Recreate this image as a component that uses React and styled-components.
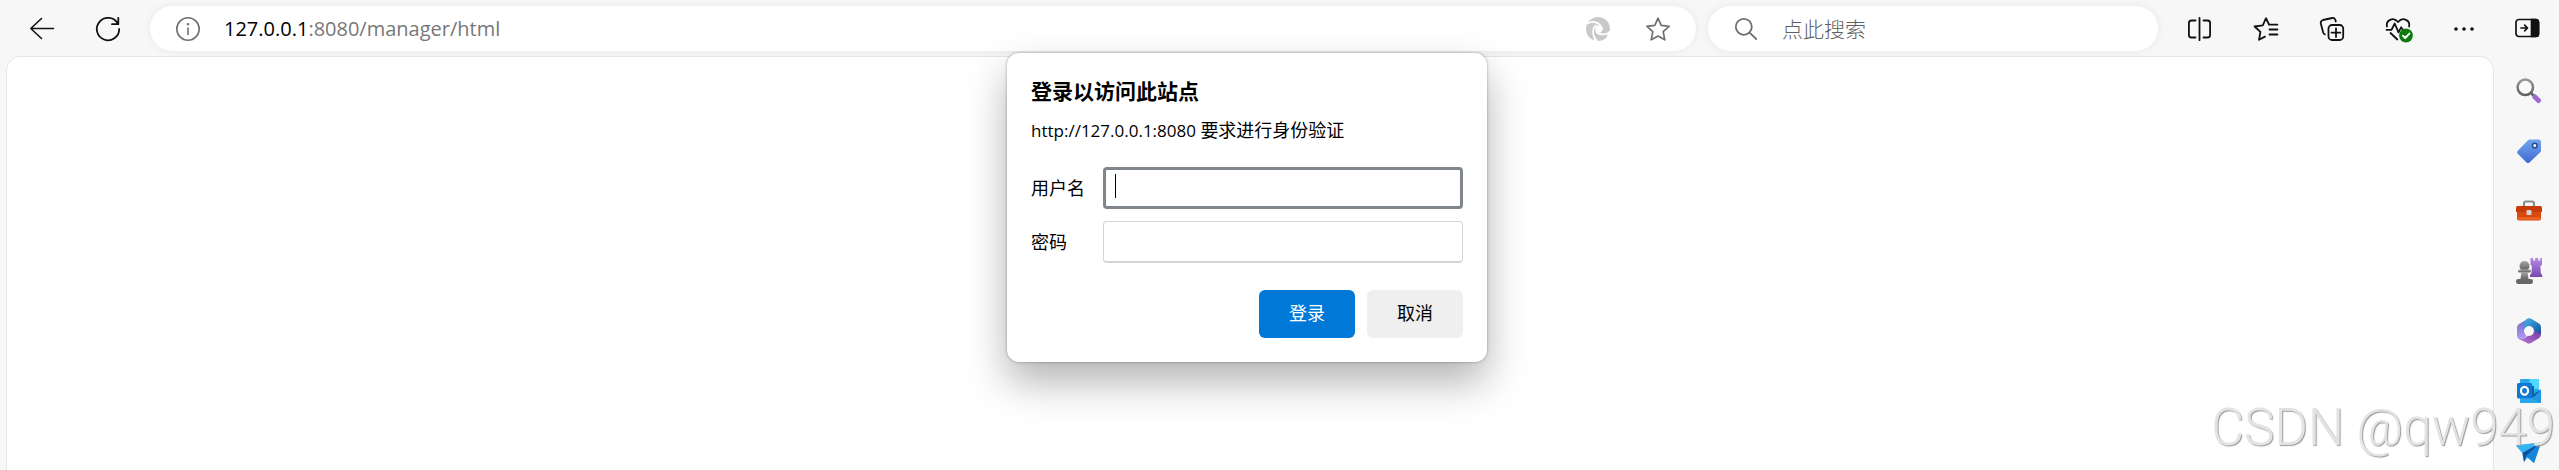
import React from "react";
import styled, { createGlobalStyle } from "styled-components";

const GlobalStyle = createGlobalStyle`
  *, *::before, *::after { box-sizing: border-box; }
  body {
    margin: 0;
    background: #f7f7f7;
    color: #000;
    font-family: "Open Sans", "Noto Sans CJK SC", sans-serif;
    overflow: hidden;
  }
  button, input { font-family: inherit; }
`;

const Browser = styled.div`
  display: flex;
  flex-direction: column;
  height: 100vh;
`;

const Toolbar = styled.header`
  display: flex;
  height: 56px;
  flex: none;
`;

const ToolbarMain = styled.div`
  flex: 1;
  min-width: 0;
  display: flex;
  align-items: center;
  gap: 18px;
  padding: 6px 6px 5px 18px;
`;

const SideSlot = styled.div`
  width: 65px;
  flex: none;
  display: flex;
  align-items: center;
  justify-content: center;
`;

const IconButton = styled.button`
  width: ${(p) => (p.$small ? "24px" : "48px")};
  height: ${(p) => (p.$small ? "24px" : "44px")};
  flex: none;
  display: flex;
  align-items: center;
  justify-content: center;
  padding: 0;
  border: 0;
  background: transparent;
  color: ${(p) => p.$color || "#111"};
`;

const Svg = styled.svg`
  width: ${(p) => p.$size || 24}px;
  height: ${(p) => p.$size || 24}px;
  display: block;
  flex: none;
  overflow: visible;
`;

const Fields = styled.div`
  flex: 1;
  min-width: 0;
  display: flex;
  gap: 12px;
`;

const Field = styled.div`
  flex: ${(p) => (p.$search ? "0 1 450px" : "1 1 0")};
  min-width: 0;
  height: 45px;
  display: flex;
  align-items: center;
  gap: 24px;
  padding: 0 26px;
  border-radius: 24px;
  background: #fff;
  color: #707070;
  box-shadow: 0 0 8px rgba(0, 0, 0, 0.07);
`;

const Url = styled.div`
  flex: 1;
  min-width: 0;
  font-size: 20px;
  line-height: 28px;
  white-space: nowrap;
  overflow: hidden;
  color: #777;
`;

const Host = styled.span`
  color: #000;
`;

const FieldActions = styled.div`
  display: flex;
  gap: 36px;
`;

const SearchInput = styled.input`
  flex: 1;
  min-width: 0;
  padding: 0;
  border: 0;
  outline: 0;
  background: transparent;
  font-size: 21px;
  line-height: 28px;
  font-weight: 300;
  &::placeholder { color: #606060; opacity: 1; }
`;

const Actions = styled.nav`
  display: flex;
  gap: 18px;
`;

const Body = styled.div`
  flex: 1;
  min-height: 0;
  display: flex;
`;

const Stage = styled.main`
  position: relative;
  flex: 1;
  min-width: 0;
  display: flex;
  padding-left: 6px;
`;

const PageSurface = styled.div`
  flex: 1;
  border: 1px solid #e6e6e6;
  border-bottom: 0;
  border-radius: 15px 15px 0 0;
  background: #fff;
`;

const Dialog = styled.form`
  position: absolute;
  top: -3px;
  left: 50%;
  width: 480px;
  margin-left: -240px;
  padding: 24px;
  border-radius: 12px;
  background: #fff;
  box-shadow: 0 0 3px rgba(0, 0, 0, 0.35), 0 20px 40px rgba(0, 0, 0, 0.3);
`;

const Title = styled.h1`
  margin: 0 0 14px;
  font-size: 21px;
  line-height: 28px;
  font-weight: 700;
`;

const Message = styled.p`
  margin: 0 0 24px;
  font-size: 17px;
  line-height: 24px;
`;

const Han = styled.span`
  font-size: 18px;
  line-height: 1;
`;

const Row = styled.div`
  display: flex;
  align-items: center;
  margin-bottom: 12px;
`;

const Label = styled.label`
  width: 72px;
  flex: none;
  font-size: 18px;
  line-height: 24px;
`;

const InputWrap = styled.div`
  position: relative;
  flex: 1;
  display: flex;
  ${(p) =>
    p.$active &&
    `&::after {
      content: "";
      position: absolute;
      left: 12px;
      top: 7px;
      width: 1px;
      height: 24px;
      background: #000;
    }`}
`;

const TextInput = styled.input`
  width: 100%;
  height: 42px;
  padding: 0 10px;
  border-radius: 4px;
  border: ${(p) => (p.$active ? "3px solid #80868b" : "1px solid #d4d4d4")};
  border-bottom-width: ${(p) => (p.$active ? "3px" : "2px")};
  outline: 0;
  background: #fff;
  font-size: 18px;
`;

const Buttons = styled.div`
  display: flex;
  justify-content: flex-end;
  gap: 12px;
  padding-top: 15px;
`;

const Button = styled.button`
  width: 96px;
  height: 48px;
  padding: 0 0 2px;
  border: 0;
  border-radius: 6px;
  font-size: 18px;
  line-height: 24px;
  background: ${(p) => (p.$primary ? "#0078d7" : "#efefef")};
  color: ${(p) => (p.$primary ? "#fff" : "#000")};
`;

const Sidebar = styled.aside`
  width: 65px;
  flex: none;
  display: flex;
  flex-direction: column;
  align-items: center;
  gap: 16px;
  padding: 13px 0 0 4px;
`;

const Watermark = styled.div`
  position: fixed;
  right: 4px;
  bottom: 12px;
  font-family: Roboto, "Liberation Sans", sans-serif;
  font-size: 51px;
  line-height: 60px;
  font-weight: 300;
  color: #e3e3e3;
  text-shadow: 1px 1px 1px #999;
  pointer-events: none;
`;

const line = { fill: "none", stroke: "currentColor", strokeWidth: 1.6, strokeLinecap: "round", strokeLinejoin: "round" };

const BackIcon = () => (
  <Svg viewBox="0 0 24 24" {...line}><path d="M23.500 11.500H.8M11.500 1.500.8 11.500l10.700 10" /></Svg>
);
const RefreshIcon = () => (
  <Svg viewBox="0 0 24 24" {...line} strokeWidth="1.800"><path d="M22.300 7.200H16M22.300 7.200V.8M22 7A11.200 11.200 0 1 0 23.200 12" /></Svg>
);
const InfoIcon = () => (
  <Svg viewBox="0 0 24 24" {...line}><circle cx="12" cy="12" r="11.200" /><path d="M12 11v6.500" /><circle cx="12" cy="7.200" r=".5" fill="currentColor" /></Svg>
);
const SwirlIcon = () => (
  <Svg viewBox="0 0 24 24">
    <circle cx="12" cy="12" r="12" fill="#c9c9c9" />
    <g fill="none" stroke="#fff" strokeWidth="1.700" strokeLinecap="round">
      <path d="M1 6.500C6 3.500 14 4.500 16.200 12" />
      <path d="M24 14.500C20 19 13 17.800 10.200 14.800" />
      <path d="M11 24C6.500 20 5.500 12 9.800 8.300" />
    </g>
    <circle cx="12.700" cy="12.200" r="3.600" fill="#fff" />
    <path d="M24.500 13v6l-4 4c0-4 1-6 4-10zM11 25l-4-2 2-2z" fill="#fff" />
  </Svg>
);
const StarIcon = () => (
  <Svg viewBox="0 0 24 24" {...line} strokeWidth="1.700"><path d="m12 1.200 3.200 7.200 7.900.9-5.900 5.300 1.600 8.200L12 19l-6.800 3.800 1.600-8.200L.9 9.300l7.900-.9z" /></Svg>
);
const SearchIcon = () => (
  <Svg viewBox="0 0 24 24" {...line} strokeWidth="1.800"><circle cx="9.800" cy="9.800" r="8" /><path d="m15.600 15.600 6.600 6.400" /></Svg>
);
const SplitIcon = () => (
  <Svg viewBox="0 0 24 24" {...line} strokeWidth="1.800"><path d="M11.500.8v22.400M7.500 3.500h-4Q.9 3.500.9 6v12q0 2.500 2.600 2.500h4M15.500 3.500h4q2.600 0 2.600 2.500v12q0 2.500-2.600 2.500h-4" /></Svg>
);
const FavoritesIcon = () => (
  <Svg viewBox="0 0 24 24" {...line} strokeWidth="1.800"><path d="M15 7.500 12 1.200 8.800 8.300.6 9.500l5.800 5.400L5 22.800l6-3.200M15 7.600h8.400M15.500 12.500h7.900M15.500 17.500h7.900" /></Svg>
);
const CollectionsIcon = () => (
  <Svg viewBox="0 0 24 24" {...line} strokeWidth="1.800"><rect x="8.500" y="8" width="14.700" height="15" rx="3.500" /><path d="M16 11.300v8.800M11.600 15.700h8.800M15.800 4.500 15.300 2.800Q14.500.7 12.300 1L3 3Q.3 3.800.8 6.500l2.400 9q.6 1.600 1.600 1.900" /></Svg>
);
const HealthIcon = () => (
  <Svg viewBox="0 0 24 24" {...line} strokeWidth="1.800">
    <path d="M.9 9.500C-.3 3.500 7-.8 12 5c5-5.800 12.500-1.500 11.100 4.500M.5 12.800h5L8.700 6.500l3.800 8.800 2.600-5 1.800 2.500h4M4.500 16l6.800 6.500" />
    <circle cx="20" cy="18.500" r="6.900" fill="#0f7b0f" stroke="none" /><path d="m16.900 18.700 2.300 2.300 4.200-4.400" stroke="#fff" strokeWidth="1.900" />
  </Svg>
);
const MoreIcon = () => (
  <Svg viewBox="0 0 24 24" fill="currentColor"><circle cx="4" cy="12" r="1.800" /><circle cx="12" cy="12" r="1.800" /><circle cx="20" cy="12" r="1.800" /></Svg>
);
const PanelIcon = () => (
  <Svg viewBox="0 0 24 24" {...line} strokeWidth="1.700"><rect x="1" y="3.500" width="22.500" height="17" rx="3" /><path d="M16.500 3.500h4q3 0 3 3v11q0 3-3 3h-4z" fill="currentColor" /><path d="M6 12h6.500M9.700 9.200l2.800 2.800-2.800 2.800" /></Svg>
);

const SideSearch = () => (
  <Svg viewBox="0 0 26 26" $size={26}>
    <defs>
      <linearGradient id="lens" x1="0" y1="0" x2="0" y2="1"><stop stopColor="#969696" /><stop offset="1" stopColor="#626262" /></linearGradient>
    </defs>
    <path d="m15 15 4 4" stroke="#636363" strokeWidth="2.600" />
    <circle cx="9.300" cy="9.300" r="7.700" fill="#fafafa" stroke="url(#lens)" strokeWidth="2.500" />
    <path d="m19 19 3.500 3.500" stroke="#9d6bd0" strokeWidth="5" strokeLinecap="round" />
  </Svg>
);
const TagIcon = () => (
  <Svg viewBox="0 0 26 26" $size={26}>
    <defs><linearGradient id="tag" x1="0" y1="0" x2="0" y2="1"><stop stopColor="#72a6ed" /><stop offset="1" stopColor="#416bd2" /></linearGradient></defs>
    <path d="M13.500 1.500h9q2.500 0 2.500 2.500v8.500q0 1-.8 1.800L13.500 24.500q-1.500 1.200-3 0l-8.700-8.800q-1.300-1.500 0-3L12 2.200q.7-.7 1.500-.7z" fill="url(#tag)" />
    <circle cx="18.800" cy="7.500" r="2.300" fill="#fff" stroke="#294a98" strokeWidth="1.600" />
  </Svg>
);
const ToolboxIcon = () => (
  <Svg viewBox="0 0 26 26" $size={26}>
    <path d="M8 8V5.500q0-2 2-2h6q2 0 2 2V8" fill="none" stroke="#8a8d90" strokeWidth="2.200" />
    <path d="M1 13h24v7.500q0 2-2 2H3q-2 0-2-2z" fill="#d9480f" />
    <path d="M1.500 8h23q1.500 0 1.500 1.500V14H0V9.500Q0 8 1.500 8z" fill="#c93a0b" />
    <path d="M2 20.500h22" stroke="#ee6a25" strokeWidth="2" />
    <rect x="10.500" y="12" width="5" height="5" rx="1.200" fill="#d4d6d8" />
  </Svg>
);
const ChessIcon = () => (
  <Svg viewBox="0 0 26 26" $size={26}>
    <defs>
      <linearGradient id="pawn" x1="0" y1="0" x2="0" y2="1"><stop stopColor="#a6a6a6" /><stop offset="1" stopColor="#5e5e5e" /></linearGradient>
      <linearGradient id="rook" x1="0" y1="0" x2="0" y2="1"><stop stopColor="#b78ae5" /><stop offset="1" stopColor="#7749ad" /></linearGradient>
    </defs>
    <path d="M14.500 0h2.700v2.500h2V0h3v2.500h2V0H26v6.200q0 1.200-1.600 1.800l.4 7 1.500 2.200V19H14v-1.800l1.500-2.200.4-7q-1.400-.6-1.400-1.800z" fill="url(#rook)" />
    <g fill="url(#pawn)"><circle cx="8.500" cy="8" r="5" /><rect x="2" y="11.500" width="13" height="3" rx="1.500" /><path d="M5.500 14h6l1.200 8H4.300z" /></g>
    <rect x="0" y="21" width="17" height="5" rx="2.300" fill="#686868" />
  </Svg>
);
const OfficeIcon = () => (
  <Svg viewBox="0 0 26 26" $size={26}>
    <defs>
      <linearGradient id="ofA" x1="0" y1="0" x2="1" y2="1"><stop stopColor="#43b8e8" /><stop offset="1" stopColor="#174b9b" /></linearGradient>
      <linearGradient id="ofB" x1="0" y1="0" x2="0" y2="1"><stop stopColor="#7660c8" /><stop offset="1" stopColor="#b2a2f5" /></linearGradient>
      <linearGradient id="ofC" x1="0" y1="1" x2="1" y2="0"><stop stopColor="#bd79da" /><stop offset="1" stopColor="#74399e" /></linearGradient>
    </defs>
    <path d="M13 .3 3 6q-2 1.200-2 3.500v8q0 3 2.800 4.200l3.700 1L10.500 18 8 13z" fill="url(#ofB)" />
    <path d="M11 .8q2-1.200 4.200 0L23 5.500q2 1.200 2 4v8L17.500 13 13 8.500 7.500 12Q7.500 3 11 .8z" fill="url(#ofA)" />
    <path d="M25 15.500q0 3.500-2.500 5L15 25q-2 1-4.200 0L3 20.800q5 1.500 8-2.300L18 13z" fill="url(#ofC)" />
    <circle cx="13" cy="13" r="4.900" fill="#f7f7f7" />
  </Svg>
);
const OutlookIcon = () => (
  <Svg viewBox="0 0 26 26" $size={26}>
    <rect x="4" y="1" width="19" height="14" rx="1" fill="#28a8ea" />
    <path d="M13.500 1H22q1 0 1 1v9h-9.500z" fill="#50d9ff" />
    <path d="M4 8h14v12H4z" fill="#0a62ad" />
    <path d="M25 11.500V24q0 1-1 1H5q-1-.5-1-1v-3.500h12z" fill="#1490df" />
    <path d="M25 11.500 16 17v3.500l9 4z" fill="#2298e0" /><path d="M25 11.500 16 17v2.500l3-1.500z" fill="#0d5fae" />
    <path d="M4 20.500h12l9 4.500H5q-1 0-1-1z" fill="#28a8ea" />
    <rect x="1" y="5" width="15" height="15.500" rx="1.500" fill="#0f78d4" />
    <ellipse cx="8.500" cy="12.700" rx="3.500" ry="3.900" fill="none" stroke="#fff" strokeWidth="2.200" />
  </Svg>
);
const PlaneIcon = () => (
  <Svg viewBox="0 0 26 26" $size={26}>
    <path d="M0 7.500 25 4.500 18 25l-6.500-5.500L8 24l-1.500-9z" fill="#2196e3" />
    <path d="M0 7.500 25 4.500 6.500 15z" fill="#37b5f1" />
    <path d="M25 4.500 6.500 15 8 24l2.200-6z" fill="#0b4f9e" />
    <path d="M25 4.500 10.200 18 18 25z" fill="#1686d9" />
  </Svg>
);

const toolbarActions = [
  ["拆分屏幕", SplitIcon],
  ["收藏夹", FavoritesIcon],
  ["集锦", CollectionsIcon],
  ["浏览器概要", HealthIcon],
  ["设置及其他", MoreIcon],
];

const sidebarApps = [
  ["搜索", SideSearch],
  ["购物", TagIcon],
  ["工具", ToolboxIcon],
  ["游戏", ChessIcon],
  ["Microsoft 365", OfficeIcon],
  ["Outlook", OutlookIcon],
  ["Drop", PlaneIcon],
];

export default function App() {
  return (
    <Browser>
      <GlobalStyle />
      <Toolbar>
        <ToolbarMain>
          <IconButton aria-label="后退"><BackIcon /></IconButton>
          <IconButton aria-label="刷新"><RefreshIcon /></IconButton>
          <Fields>
            <Field>
              <IconButton $small $color="#707070" aria-label="站点信息"><InfoIcon /></IconButton>
              <Url role="textbox" aria-label="地址栏"><Host>127.0.0.1</Host>:8080/manager/html</Url>
              <FieldActions>
                <IconButton $small aria-label="Internet Explorer"><SwirlIcon /></IconButton>
                <IconButton $small $color="#707070" aria-label="添加到收藏夹"><StarIcon /></IconButton>
              </FieldActions>
            </Field>
            <Field $search>
              <SearchIcon />
              <SearchInput type="search" aria-label="搜索" placeholder="点此搜索" />
            </Field>
          </Fields>
          <Actions>
            {toolbarActions.map(([label, Icon]) => (
              <IconButton key={label} aria-label={label}><Icon /></IconButton>
            ))}
          </Actions>
        </ToolbarMain>
        <SideSlot>
          <IconButton aria-label="侧边栏"><PanelIcon /></IconButton>
        </SideSlot>
      </Toolbar>
      <Body>
        <Stage>
          <PageSurface />
          <Dialog onSubmit={(e) => e.preventDefault()}>
            <Title>登录以访问此站点</Title>
            <Message>http://127.0.0.1:8080 <Han>要求进行身份验证</Han></Message>
            <Row>
              <Label htmlFor="user">用户名</Label>
              <InputWrap $active><TextInput id="user" type="text" $active /></InputWrap>
            </Row>
            <Row>
              <Label htmlFor="password">密码</Label>
              <InputWrap><TextInput id="password" type="password" /></InputWrap>
            </Row>
            <Buttons>
              <Button type="submit" $primary>登录</Button>
              <Button type="button">取消</Button>
            </Buttons>
          </Dialog>
        </Stage>
        <Sidebar>
          {sidebarApps.map(([label, Icon]) => (
            <IconButton key={label} aria-label={label}><Icon /></IconButton>
          ))}
        </Sidebar>
      </Body>
      <Watermark>CSDN @qw949</Watermark>
    </Browser>
  );
}
